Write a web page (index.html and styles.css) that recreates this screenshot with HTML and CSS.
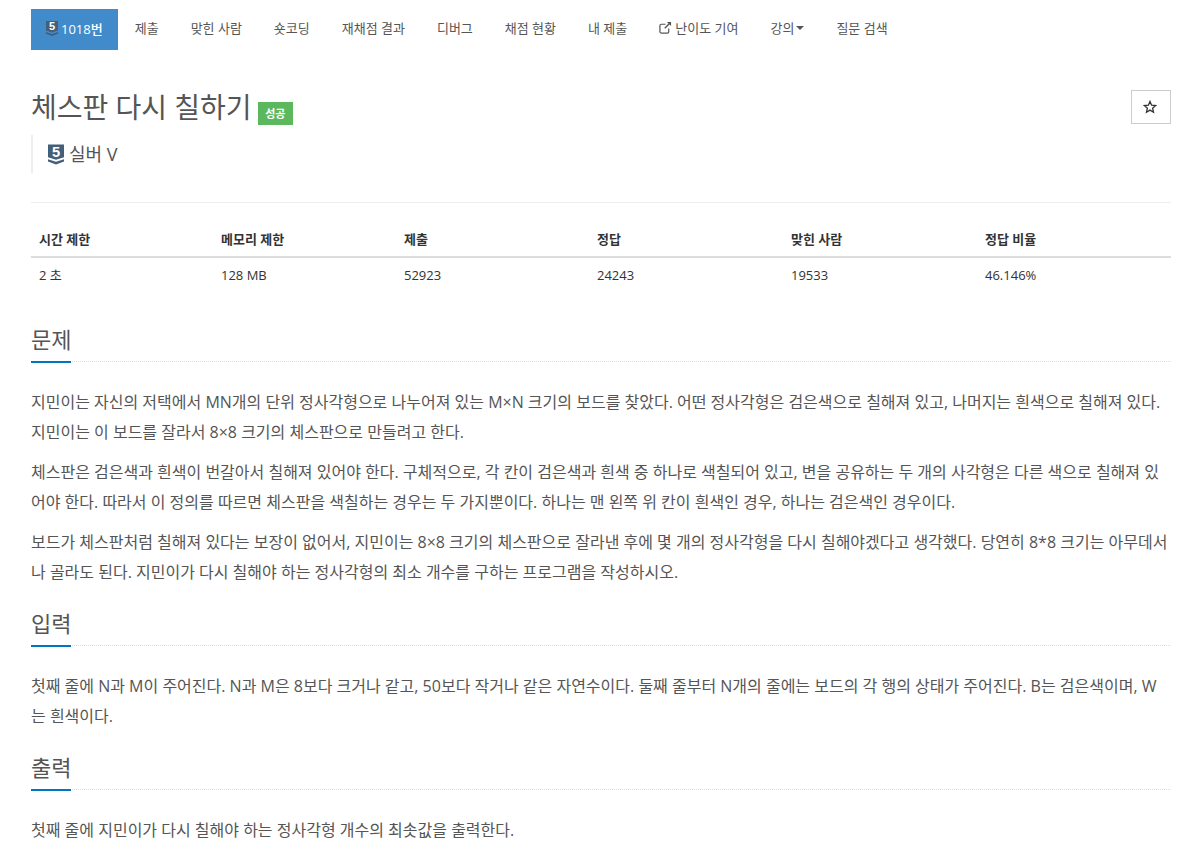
FILE: index.html
```html
<!DOCTYPE html>
<html lang="ko">
<head>
<meta charset="utf-8">
<title>체스판 다시 칠하기</title>
<link rel="stylesheet" href="styles.css">
</head>
<body>
<div class="page">
  <nav class="nav">
    <a class="nav-item active"><svg class="tier-small" viewBox="0 0 24 30"><path class="tier-shield" d="M0 0H24V19L12 23L0 19Z"/><path class="tier-chev" d="M0 22L12 26L24 22V25.5L12 30L0 25.5Z"/><text class="tier-num" x="12" y="18">5</text></svg>1018번</a>
    <a class="nav-item">제출</a>
    <a class="nav-item">맞힌 사람</a>
    <a class="nav-item">숏코딩</a>
    <a class="nav-item">재채점 결과</a>
    <a class="nav-item">디버그</a>
    <a class="nav-item">채점 현황</a>
    <a class="nav-item">내 제출</a>
    <a class="nav-item"><svg class="ext" viewBox="0 0 14 14"><path d="M10.5 8V11.5A1.5 1.5 0 0 1 9 13H2.5A1.5 1.5 0 0 1 1 11.5V5A1.5 1.5 0 0 1 2.5 3.5H7" fill="none" stroke="currentColor" stroke-width="1.3"/><path d="M8.5 1H13V5.5L11.3 3.8L6.8 8.3L5.7 7.2L10.2 2.7Z" fill="currentColor"/></svg>난이도 기여</a>
    <a class="nav-item">강의<span class="caret"></span></a>
    <a class="nav-item">질문 검색</a>
  </nav>

  <header class="head">
    <div class="head-main">
      <h1 class="title">체스판 다시 칠하기 <span class="badge">성공</span></h1>
      <div class="tier-quote"><svg class="tier-big" viewBox="0 0 24 30"><path class="tier-shield" d="M0 0H24V19L12 23L0 19Z"/><path class="tier-chev" d="M0 22L12 26L24 22V25.5L12 30L0 25.5Z"/><text class="tier-num" x="12" y="18">5</text></svg>실버 V</div>
    </div>
    <button class="star" type="button"><svg class="star-icon" viewBox="0 0 14 14"><path d="M7 1.4L8.6 5.2L12.7 5.5L9.6 8.2L10.5 12.2L7 10.1L3.5 12.2L4.4 8.2L1.3 5.5L5.4 5.2Z"/></svg></button>
  </header>

  <table class="stats">
    <thead>
      <tr><th class="c1">시간 제한</th><th class="c2">메모리 제한</th><th class="c3">제출</th><th class="c4">정답</th><th class="c5">맞힌 사람</th><th class="c6">정답 비율</th></tr>
    </thead>
    <tbody>
      <tr><td>2 초</td><td>128 MB</td><td>52923</td><td>24243</td><td>19533</td><td>46.146%</td></tr>
    </tbody>
  </table>

  <section class="sec">
    <h2 class="sec-title"><span>문제</span></h2>
    <p>지민이는 자신의 저택에서 MN개의 단위 정사각형으로 나누어져 있는 M×N 크기의 보드를 찾았다. 어떤 정사각형은 검은색으로 칠해져 있고, 나머지는 흰색으로 칠해져 있다. 지민이는 이 보드를 잘라서 8×8 크기의 체스판으로 만들려고 한다.</p>
    <p>체스판은 검은색과 흰색이 번갈아서 칠해져 있어야 한다. 구체적으로, 각 칸이 검은색과 흰색 중 하나로 색칠되어 있고, 변을 공유하는 두 개의 사각형은 다른 색으로 칠해져 있어야 한다. 따라서 이 정의를 따르면 체스판을 색칠하는 경우는 두 가지뿐이다. 하나는 맨 왼쪽 위 칸이 흰색인 경우, 하나는 검은색인 경우이다.</p>
    <p>보드가 체스판처럼 칠해져 있다는 보장이 없어서, 지민이는 8×8 크기의 체스판으로 잘라낸 후에 몇 개의 정사각형을 다시 칠해야겠다고 생각했다. 당연히 8*8 크기는 아무데서나 골라도 된다. 지민이가 다시 칠해야 하는 정사각형의 최소 개수를 구하는 프로그램을 작성하시오.</p>
  </section>
  <section class="sec">
    <h2 class="sec-title"><span>입력</span></h2>
    <p>첫째 줄에 N과 M이 주어진다. N과 M은 8보다 크거나 같고, 50보다 작거나 같은 자연수이다. 둘째 줄부터 N개의 줄에는 보드의 각 행의 상태가 주어진다. B는 검은색이며, W는 흰색이다.</p>
  </section>
  <section class="sec">
    <h2 class="sec-title"><span>출력</span></h2>
    <p>첫째 줄에 지민이가 다시 칠해야 하는 정사각형 개수의 최솟값을 출력한다.</p>
  </section>
</div>
</body>
</html>
```
FILE: styles.css
```css
* { box-sizing: border-box; }
html, body { margin: 0; padding: 0; background: #fff; }
body {
  font-family: "Open Sans", "Noto Sans CJK KR", sans-serif;
  font-size: 14px;
  line-height: 20px;
  color: #333;
  overflow: hidden;
}
.page { padding: 9px 32px 0 31px; }
.nav { display: flex; height: 41px; }
.nav-item {
  display: flex;
  align-items: center;
  padding: 0 16px 4px;
  font-size: 13px;
  color: #555;
  white-space: nowrap;
}
.nav-item.active { background: #428bca; color: #fff; padding: 0 15px 2px; margin-right: 1px; font-weight: 500; }
.tier-small { width: 12px; height: 15px; margin-right: 3px; }
.tier-big { width: 16px; height: 21px; margin-right: 5px; }
.tier-shield { fill: #435f7a; }
.tier-chev { fill: #435f7a; }
.tier-num { fill: #fff; font-family: "Liberation Sans", sans-serif; font-size: 22px; font-weight: 700; text-anchor: middle; }
.ext { width: 13px; height: 13px; margin-right: 3px; }
.caret { width: 0; height: 0; margin-left: 2px; border-top: 4px solid #555; border-left: 4px solid transparent; border-right: 4px solid transparent; }
.head { display: flex; justify-content: space-between; align-items: flex-start; margin-top: 40px; padding-bottom: 29px; border-bottom: 1px solid #eee; }
.title { margin: 0; font-size: 28px; line-height: 36px; font-weight: 400; color: #555; display: flex; align-items: flex-end; gap: 6px; height: 35px; }
.badge { background: #5cb85c; color: #fff; font-size: 11px; font-weight: 700; line-height: 23px; height: 23px; padding: 0 7.5px; }
.tier-quote { display: flex; align-items: center; margin-top: 10px; height: 38px; border-left: 2px solid #eee; padding-left: 15px; font-size: 18px; color: #555; }
.star { display: flex; align-items: center; justify-content: center; width: 40px; height: 34px; background: #fff; border: 1px solid #ccc; padding: 0 2px 0 0; }
.star-icon { width: 14px; height: 14px; }
.star-icon path { fill: none; stroke: #333; stroke-width: 1.3; }
.stats { width: 1140px; margin-top: 20px; border-collapse: collapse; table-layout: fixed; font-size: 13px; }
.stats th, .stats td { text-align: left; line-height: 20px; }
.stats th { font-weight: 700; border-bottom: 2px solid #ddd; padding: 6px 8px 7px; }
.stats td { height: 36px; padding: 7px 8px 9px; }
.c1 { width: 182px; }
.c2 { width: 183px; }
.c3 { width: 193px; }
.c4 { width: 194px; }
.c5 { width: 194px; }
.c6 { width: 194px; }
.sec-title { display: flex; align-items: flex-start; margin: 21px 0 25px; font-size: 22px; font-weight: 400; color: #555; line-height: 30px; height: 38px; border-bottom: 1px dotted #ddd; }
.sec-title span { height: 39px; border-bottom: 2px solid #0076c0; }
.sec p { margin: 0 0 10px; font-size: 16px; line-height: 30px; color: #555; }
.sec:first-of-type { margin-top: 30px; }
```
